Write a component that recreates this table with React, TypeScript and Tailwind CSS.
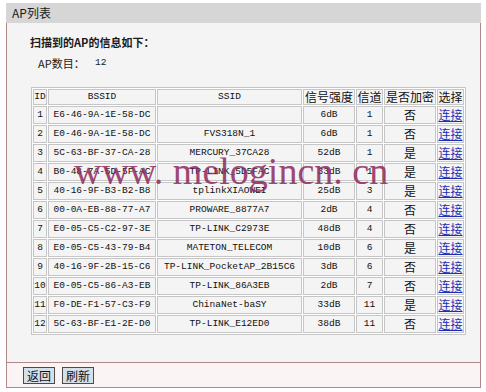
import React from "react";

const mono = "font-['Liberation_Mono',monospace] text-[9.5px]";
const cjk = "font-['Noto_Sans_CJK_SC',sans-serif] text-[12px]";

const rows: [number, string, string, string, string, string][] = [
  [1, "E6-46-9A-1E-58-DC", "", "6dB", "1", "否"],
  [2, "E0-46-9A-1E-58-DC", "FVS318N_1", "6dB", "1", "否"],
  [3, "5C-63-BF-37-CA-28", "MERCURY_37CA28", "52dB", "1", "是"],
  [4, "B0-48-7A-5D-5F-AC", "TP-LINK_5D5FAC", "33dB", "1", "是"],
  [5, "40-16-9F-B3-B2-B8", "tplinkXIAOWEI", "25dB", "3", "是"],
  [6, "00-0A-EB-88-77-A7", "PROWARE_8877A7", "2dB", "4", "否"],
  [7, "E0-05-C5-C2-97-3E", "TP-LINK_C2973E", "48dB", "4", "否"],
  [8, "E0-05-C5-43-79-B4", "MATETON_TELECOM", "10dB", "6", "是"],
  [9, "40-16-9F-2B-15-C6", "TP-LINK_PocketAP_2B15C6", "3dB", "6", "否"],
  [10, "E0-05-C5-86-A3-EB", "TP-LINK_86A3EB", "2dB", "7", "否"],
  [11, "F0-DE-F1-57-C3-F9", "ChinaNet-baSY", "33dB", "11", "是"],
  [12, "5C-63-BF-E1-2E-D0", "TP-LINK_E12ED0", "38dB", "11", "否"],
];

const td = "border border-[#c6c6c6] p-0 text-center leading-[12px] text-[#111] whitespace-nowrap";

export default function App() {
  return (
    <div className="relative w-[486px] h-[392px] bg-white pt-[3px] pl-[6px]">
      <div className="w-[475px]">
        {/* Title bar */}
        <div className={`h-[20px] bg-[#d6d6d6] pl-[6px] leading-[20px] text-[#1a1a1a] ${cjk}`}>
          AP列表
        </div>

        {/* Body */}
        <div className="h-[339px] border-x border-[#b08a8a] bg-[#f4f4f4] pt-[12px]">
          <div className="pl-[23px] h-[14px] leading-[14px] font-bold text-[11px] text-[#1a1a1a] font-['Noto_Sans_CJK_SC',sans-serif]">
            扫描到的AP的信息如下：
          </div>
          <div className="mt-[7px] pl-[31px] h-[14px] leading-[14px] flex text-[11px] text-[#1a1a1a] font-['Noto_Sans_CJK_SC',sans-serif]">
            <span className="w-[57px]">AP数目：</span>
            <span className={mono}>12</span>
          </div>

          <table className="mt-[17px] ml-[24px] w-[425px] table-fixed border-separate border-spacing-[1px] border border-[#c6c6c6] bg-white">
            <colgroup>
              <col className="w-[14px]" />
              <col className="w-[108px]" />
              <col className="w-[145px]" />
              <col className="w-[52px]" />
              <col className="w-[27px]" />
              <col className="w-[52px]" />
              <col className="w-[27px]" />
            </colgroup>
            <thead>
              <tr className="h-[16px] bg-[#f4f4f4]">
                <th className={`${td} ${mono} font-normal`}>ID</th>
                <th className={`${td} ${mono} font-normal`}>BSSID</th>
                <th className={`${td} ${mono} font-normal`}>SSID</th>
                <th className={`${td} ${cjk} font-normal`}>信号强度</th>
                <th className={`${td} ${cjk} font-normal`}>信道</th>
                <th className={`${td} ${cjk} font-normal`}>是否加密</th>
                <th className={`${td} ${cjk} font-normal`}>选择</th>
              </tr>
            </thead>
            <tbody>
              {rows.map((r) => (
                <tr key={r[0]} className="h-[18px] bg-[#f4f4f4]">
                  <td className={`${td} ${mono}`}>{r[0]}</td>
                  <td className={`${td} ${mono}`}>{r[1]}</td>
                  <td className={`${td} ${mono}`}>{r[2]}</td>
                  <td className={`${td} ${mono}`}>{r[3]}</td>
                  <td className={`${td} ${mono}`}>{r[4]}</td>
                  <td className={`${td} ${cjk}`}>{r[5]}</td>
                  <td className={`${td} ${cjk}`}>
                    <a className="text-[#1c2fb5] underline">连接</a>
                  </td>
                </tr>
              ))}
            </tbody>
          </table>
        </div>

        {/* Footer */}
        <div className="h-[26px] border border-[#b08a8a] bg-[#fbf4f4] flex items-center gap-[7px] pl-[16px]">
          <button className={`h-[17px] w-[32px] border border-[#4a4a4a] bg-[#d6e0e9] leading-[15px] text-[#111] ${cjk}`}>
            返回
          </button>
          <button className={`h-[17px] w-[32px] border border-[#4a4a4a] bg-[#d6e0e9] leading-[15px] text-[#111] ${cjk}`}>
            刷新
          </button>
        </div>
      </div>

      {/* Watermark */}
      <div className="absolute left-[74px] top-[152px] whitespace-pre font-['Liberation_Serif',serif] text-[38px] leading-[38px] text-[#8e2a5c] opacity-85 pointer-events-none">
        www. melogincn. cn
      </div>
    </div>
  );
}
